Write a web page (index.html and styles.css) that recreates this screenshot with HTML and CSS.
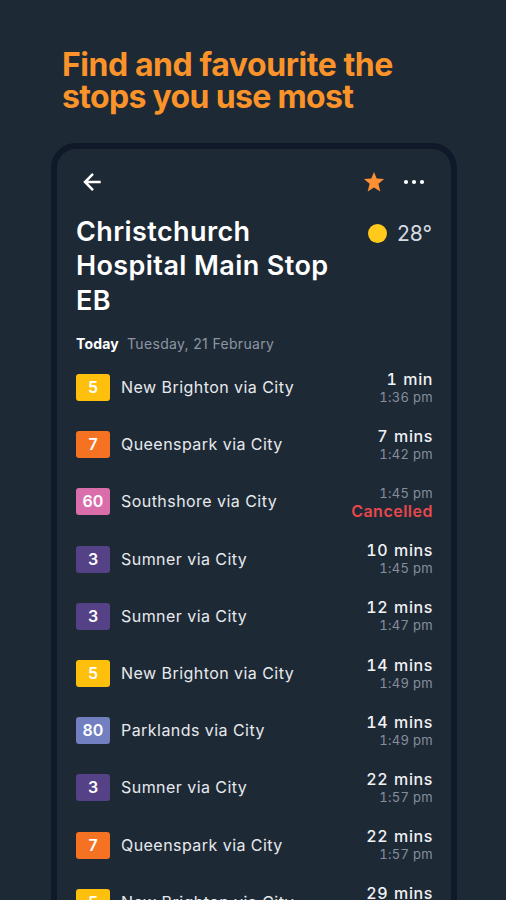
FILE: index.html
```html
<!DOCTYPE html>
<html lang="en">
<head>
  <meta charset="UTF-8">
  <meta name="viewport" content="width=device-width, initial-scale=1.0">
  <title>Favourite stops</title>
  <link rel="stylesheet" href="styles.css">
</head>
<body>
  <h1 class="headline">Find and favourite the<br><span>stops you use most</span></h1>
  <main class="phone">
    <nav class="toolbar">
      <svg class="back" width="20" height="20" viewBox="0 0 20 20" fill="none" stroke="#fff" stroke-width="2.5">
        <path d="M18.7 10H3.5M11 1.9L3 10l8 8.1"/>
      </svg>
      <svg class="star" width="22" height="22" viewBox="0 0 22 22" fill="#ff8f33">
        <path d="M11 .9l2.7 6.7 7.4.5-5.7 4.7 1.9 7.6-6.3-4-6.3 4 1.9-7.6L.9 8.1l7.4-.5z"/>
      </svg>
      <svg class="more" width="22" height="6" viewBox="0 0 22 6" fill="#fff">
        <circle cx="3" cy="3" r="2.1"/>
        <circle cx="11" cy="3" r="2.1"/>
        <circle cx="19" cy="3" r="2.1"/>
      </svg>
    </nav>

    <header class="stop">
      <h2>Christchurch<br>Hospital Main Stop<br>EB</h2>
      <div class="weather"><i class="sun"></i><span>28°</span></div>
    </header>

    <p class="date"><b>Today</b><span>Tuesday, 21 February</span></p>

    <ul class="departures">
      <li><span class="route yellow">5</span><span class="name">New Brighton via City</span><div class="time"><b>1 min</b><small>1:36 pm</small></div></li>
      <li><span class="route orange">7</span><span class="name">Queenspark via City</span><div class="time"><b>7 mins</b><small>1:42 pm</small></div></li>
      <li><span class="route pink">60</span><span class="name">Southshore via City</span><div class="time cancelled"><small>1:45 pm</small><b>Cancelled</b></div></li>
      <li><span class="route purple">3</span><span class="name">Sumner via City</span><div class="time"><b>10 mins</b><small>1:45 pm</small></div></li>
      <li><span class="route purple">3</span><span class="name">Sumner via City</span><div class="time"><b>12 mins</b><small>1:47 pm</small></div></li>
      <li><span class="route yellow">5</span><span class="name">New Brighton via City</span><div class="time"><b>14 mins</b><small>1:49 pm</small></div></li>
      <li><span class="route blue">80</span><span class="name">Parklands via City</span><div class="time"><b>14 mins</b><small>1:49 pm</small></div></li>
      <li><span class="route purple">3</span><span class="name">Sumner via City</span><div class="time"><b>22 mins</b><small>1:57 pm</small></div></li>
      <li><span class="route orange">7</span><span class="name">Queenspark via City</span><div class="time"><b>22 mins</b><small>1:57 pm</small></div></li>
      <li><span class="route yellow">5</span><span class="name">New Brighton via City</span><div class="time"><b>29 mins</b><small>2:04 pm</small></div></li>
    </ul>
  </main>
</body>
</html>
```
FILE: styles.css
```css
* {
  box-sizing: border-box;
  margin: 0;
  padding: 0;
}

body {
  height: 900px;
  overflow: hidden;
  background: #1e2936;
  color: #fff;
  font-family: Inter, "Liberation Sans", sans-serif;
}

.headline {
  height: 143px;
  padding: 49px 0 0 62px;
  color: #fa9329;
  font-size: 32px;
  line-height: 32px;
  font-weight: 700;
  letter-spacing: -.43px;
  white-space: nowrap;

  span {
    letter-spacing: -.67px;
  }
}

.phone {
  width: 406px;
  height: 800px;
  margin-left: 51px;
  padding: 0 18px 0 19px;
  border: 6px solid #101929;
  border-radius: 25px;
}

.toolbar {
  display: flex;
  align-items: center;
  height: 65px;
  padding: 0 8px 0 6px;

  .star {
    margin-left: auto;
    margin-right: 18px;
  }
}

.stop {
  display: flex;
  justify-content: space-between;
  height: 117px;

  h2 {
    padding-top: 1px;
    font-size: 27px;
    line-height: 34.3px;
    font-weight: 600;
    letter-spacing: .4px;
    white-space: nowrap;
  }
}

.weather {
  display: flex;
  align-items: center;
  gap: 10px;
  height: 38px;
  padding-right: 1px;
  color: #d5d9e0;
  font-size: 21px;
}

.sun {
  width: 19px;
  height: 19px;
  border-radius: 50%;
  background: #ffca1c;
}

.date {
  display: flex;
  gap: 8px;
  height: 28px;
  padding-top: 1px;
  line-height: 24px;
  font-size: 14px;
  letter-spacing: .2px;
  white-space: nowrap;

  span {
    color: #8d95a3;
    letter-spacing: .33px;
  }
}

.departures {
  list-style: none;

  li {
    display: flex;
    align-items: center;
    height: 57.2px;
  }
}

.route {
  width: 34px;
  height: 27px;
  margin-right: 11px;
  border-radius: 3px;
  font-size: 16px;
  line-height: 27px;
  font-weight: 600;
  text-align: center;
}

.yellow { background: #ffbf0d; }
.orange { background: #f57223; }
.pink { background: #da6eab; }
.purple { background: #554286; }
.blue { background: #727fc0; }

.name {
  padding-bottom: 1px;
  color: #e7e9ed;
  font-size: 16px;
  letter-spacing: .45px;
}

.time {
  display: flex;
  flex-direction: column;
  align-items: flex-end;
  margin-left: auto;
  font-variant-numeric: tabular-nums;

  b {
    color: #f0f2f4;
    font-size: 16px;
    line-height: 18px;
    font-weight: 500;
    letter-spacing: .6px;
    word-spacing: 1px;
  }

  small {
    color: #858e9c;
    font-size: 13px;
    line-height: 18px;
    letter-spacing: .3px;
  }
}

.cancelled b {
  color: #e5484d;
  font-weight: 600;
  letter-spacing: .5px;
}
```
